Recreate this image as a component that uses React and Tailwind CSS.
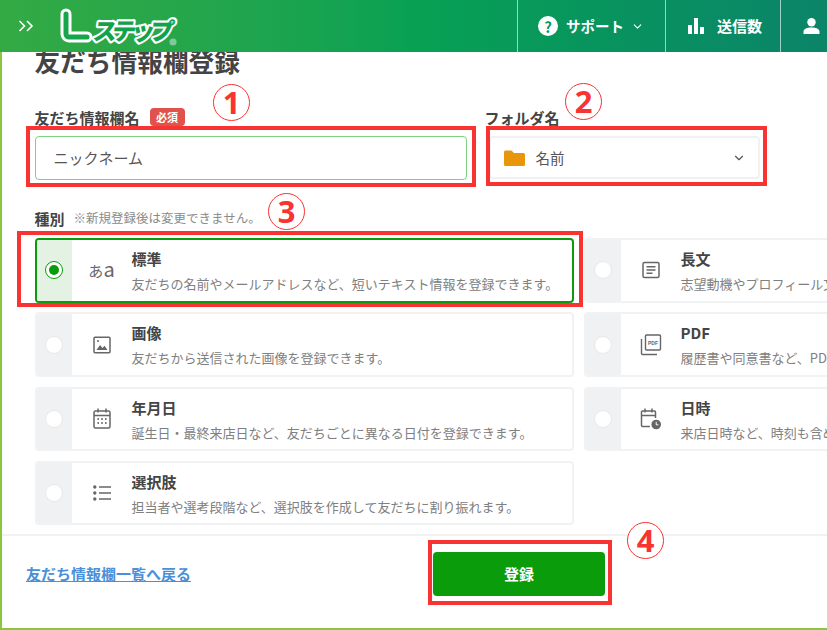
import React from 'react';
import { ChevronDown } from 'lucide-react';

const FONT = { fontFamily: '"Noto Sans CJK JP", "Noto Sans", sans-serif' };

const Logo = () => (
  <svg width="124" height="44" viewBox="0 0 124 44" className="shrink-0 self-center">
    <path d="M7 10v20a3 3 0 0 0 3 3h18" fill="none" stroke="#fff" strokeWidth="11" strokeLinecap="round" strokeLinejoin="round" />
    <path d="M7 10v20a3 3 0 0 0 3 3h18" fill="none" stroke="#16a54a" strokeWidth="5" strokeLinecap="round" strokeLinejoin="round" />
    <text transform="translate(33 36) skewX(-8)" fontSize="24" fontWeight="900" letterSpacing="-5" fontFamily="'Noto Sans CJK JP', sans-serif" fill="#12a24c" stroke="#fff" strokeWidth="4.4" strokeLinejoin="round" paintOrder="stroke">ステップ</text>
    <circle cx="114" cy="38" r="3.6" fill="#7fc99a" />
  </svg>
);

const IconText = () => (
  <svg width="18" height="18" viewBox="0 0 18 18" fill="none" stroke="#666" strokeWidth="1.5">
    <rect x="1" y="1.5" width="16" height="15" rx="1.5" />
    <path d="M4.5 5.8h9M4.5 9h9M4.5 12.2h6" />
  </svg>
);

const IconImage = () => (
  <svg width="18" height="18" viewBox="0 0 18 18" fill="none">
    <rect x="1" y="1.2" width="16" height="15.6" rx="1" stroke="#666" strokeWidth="1.5" />
    <circle cx="5" cy="5" r="1" fill="#666" />
    <path d="M3.5 14l3.6-5 2.4 3 2-2.2 3 4.2z" fill="#666" />
  </svg>
);

const IconPdf = () => (
  <svg width="22" height="22" viewBox="0 0 22 22" fill="none" stroke="#666" strokeWidth="1.4">
    <rect x="5.5" y="1" width="15" height="15" rx="1" />
    <path d="M1.5 5v14.5a1 1 0 0 0 1 1H17" />
    <text x="13" y="11" fontSize="5" fontWeight="700" textAnchor="middle" fill="#666" stroke="none" fontFamily="'Liberation Sans', sans-serif">PDF</text>
  </svg>
);

const IconCalendar = () => (
  <svg width="18" height="21" viewBox="0 0 18 21" fill="none" stroke="#666" strokeWidth="1.5">
    <rect x="1" y="3" width="16" height="17" rx="1.5" />
    <path d="M1 7.5h16M5 0.5v4M13 0.5v4" />
    <path d="M4.5 11h1.4M8.3 11h1.4M12.1 11h1.4M4.5 15h1.4M8.3 15h1.4M12.1 15h1.4" strokeWidth="1.8" />
  </svg>
);

const IconCalendarClock = () => (
  <svg width="22" height="22" viewBox="0 0 22 22" fill="none">
    <path d="M10 18.5H2.5a1 1 0 0 1-1-1V4a1 1 0 0 1 1-1h12a1 1 0 0 1 1 1v6M1.5 7.5h14M5 0.5v4M12 0.5v4" stroke="#666" strokeWidth="1.5" />
    <circle cx="16.2" cy="16.5" r="4.8" fill="#666" />
    <path d="M16.2 13.8v3h2.2" stroke="#fff" strokeWidth="1" />
  </svg>
);

const IconList = () => (
  <svg width="18" height="16" viewBox="0 0 18 16" fill="none">
    <circle cx="1.8" cy="2" r="1.7" fill="#666" />
    <circle cx="1.8" cy="8" r="1.7" fill="#666" />
    <circle cx="1.8" cy="14" r="1.7" fill="#666" />
    <path d="M6 2h12M6 8h12M6 14h12" stroke="#666" strokeWidth="1.5" />
  </svg>
);

const types = [
  { title: '標準', desc: '友だちの名前やメールアドレスなど、短いテキスト情報を登録できます。', icon: <span className="text-[15px] text-[#666]">あ<span className="text-[20px] leading-none">a</span></span>, selected: true },
  { title: '長文', desc: '志望動機やプロフィール文など、長いテキスト情報を登録できます。', icon: <IconText /> },
  { title: '画像', desc: '友だちから送信された画像を登録できます。', icon: <IconImage /> },
  { title: 'PDF', desc: '履歴書や同意書など、PDFファイルを登録できます。', icon: <IconPdf /> },
  { title: '年月日', desc: '誕生日・最終来店日など、友だちごとに異なる日付を登録できます。', icon: <IconCalendar /> },
  { title: '日時', desc: '来店日時など、時刻も含めた日付を登録できます。', icon: <IconCalendarClock /> },
  { title: '選択肢', desc: '担当者や選考段階など、選択肢を作成して友だちに割り振れます。', icon: <IconList /> },
];

const TypeCard = ({ title, desc, icon, selected }) => (
  <div className={`flex rounded overflow-hidden border-2 ${selected ? 'border-[#0a9c0a]' : 'border-[#f1f2f4]'}`}>
    <div className={`w-[35px] shrink-0 flex items-center justify-center ${selected ? 'bg-[#e3f2e3]' : 'bg-[#f0f1f3]'}`}>
      {selected ? (
        <span className="w-[18px] h-[18px] rounded-full bg-white border border-[#0a9c0a] flex items-center justify-center">
          <span className="w-[10px] h-[10px] rounded-full bg-[#0a9c0a]"></span>
        </span>
      ) : (
        <span className="w-[18px] h-[18px] rounded-full bg-white border border-[#e8e8e8]"></span>
      )}
    </div>
    <div className="w-[60px] shrink-0 flex items-center justify-center">{icon}</div>
    <div className="min-w-0 pt-[8px]">
      <div className="text-[15px] leading-[22px] font-bold text-[#444]">{title}</div>
      <div className="mt-[4px] text-[13px] leading-[20px] text-[#808080] whitespace-nowrap">{desc}</div>
    </div>
  </div>
);

// 説明用の赤枠と丸数字
const RedBox = ({ className }) => (
  <div className={`absolute border-4 border-[#f93232] pointer-events-none ${className}`}></div>
);

const Num = ({ n, className }) => (
  <div className={`absolute w-[37px] h-[37px] rounded-full border-[1.5px] border-[#f93232] bg-white flex items-center justify-center text-[31px] font-bold text-[#f93232] ${className}`}>
    <span className="leading-none" style={{ fontFamily: '"Noto Sans", sans-serif' }}>{n}</span>
  </div>
);

export default function App() {
  return (
    <div className="relative w-[827px] h-[630px] overflow-hidden bg-white flex flex-col" style={FONT}>
      {/* ヘッダー */}
      <header className="relative z-10 h-[52px] shrink-0 flex items-stretch text-white bg-gradient-to-r from-[#33aa44] via-[#07a153] to-[#0b8468]">
        <div className="flex items-center pl-[18px] w-[59px] text-[21px] leading-none">
          <svg width="16" height="12" viewBox="0 0 16 12" fill="none" stroke="#fff" strokeWidth="1.6">
            <path d="M1.5 1l5 5-5 5M9 1l5 5-5 5" />
          </svg>
        </div>
        <Logo />
        <div className="ml-auto flex items-stretch">
          <div className="w-[148px] border-l border-white/60 flex items-center pl-[20px]">
            <span className="w-[20px] h-[20px] rounded-full bg-white text-[#0a9560] text-[15px] font-bold flex items-center justify-center leading-none">?</span>
            <span className="ml-[8px] text-[14.5px] font-bold">サポート</span>
            <ChevronDown size={13} strokeWidth={2} className="ml-[7px]" />
          </div>
          <div className="w-[115px] border-l border-white/60 flex items-center pl-[22px]">
            <svg width="16" height="16" viewBox="0 0 16 16" fill="#fff">
              <rect x="0" y="7" width="4" height="9" />
              <rect x="6" y="0" width="4" height="16" />
              <rect x="12" y="9" width="4" height="7" />
            </svg>
            <span className="ml-[13px] text-[15px] font-bold">送信数</span>
          </div>
          <div className="w-[47px] border-l border-white/60 flex items-center pl-[22px]">
            <svg width="17" height="16" viewBox="0 0 17 16" fill="#fff">
              <circle cx="8.5" cy="4.2" r="4.2" />
              <path d="M0.5 16v-2.2C0.5 11 4 9.6 8.5 9.6s8 1.4 8 4.2V16z" />
            </svg>
          </div>
        </div>
      </header>

      {/* 本体 */}
      <main className="flex-1 min-h-0 border-l-2 border-b-2 border-[#8cc63f] flex flex-col">
        <div className="flex-1 pl-[32.5px] -mt-[4px]">
          <h1 className="text-[25.7px] leading-[26px] font-bold text-[#444] whitespace-nowrap">友だち情報欄登録</h1>

          <div className="mt-[33px] flex">
            <div className="w-[432px]">
              <div className="h-[20px] flex items-center">
                <span className="text-[15px] leading-none font-bold text-[#444]">友だち情報欄名</span>
                <span className="ml-[10px] h-[18px] w-[35px] rounded-sm bg-[#e0534c] text-white text-[11px] font-bold flex items-center justify-center leading-none">必須</span>
              </div>
              <div className="mt-[9px] h-[44px] rounded border border-[#7fd07f] flex items-center pl-[18px] text-[15px] text-[#555]">ニックネーム</div>
            </div>
            <div className="ml-[18px] w-[275px]">
              <div className="h-[20px] flex items-center text-[15px] leading-none font-bold text-[#444]">フォルダ名</div>
              <div className="mt-[9px] ml-[4px] h-[43px] w-[271px] rounded border-2 border-[#f1f1f3] flex items-center pl-[13px] pr-[12px]">
                <svg width="21" height="16" viewBox="0 0 21 16" fill="#e8960c">
                  <path d="M0 2a1.5 1.5 0 0 1 1.5-1.5h6L10 3h9.5A1.5 1.5 0 0 1 21 4.5v10a1.5 1.5 0 0 1-1.5 1.5h-18A1.5 1.5 0 0 1 0 14.5z" />
                </svg>
                <span className="ml-[11px] text-[14.5px] text-[#555]">名前</span>
                <ChevronDown size={14} strokeWidth={2} className="ml-auto text-[#555]" />
              </div>
            </div>
          </div>

          <div className="mt-[28px] h-[20px] flex items-center">
            <span className="text-[15px] leading-none font-bold text-[#444]">種別</span>
            <span className="ml-[9px] text-[12.5px] leading-none text-[#8a8a8a]">※新規登録後は変更できません。</span>
          </div>

          <div className="mt-[10px] grid grid-cols-[539px_539px] auto-rows-[64.5px] gap-x-[10px] gap-y-[9.8px]">
            {types.map((t) => (
              <TypeCard key={t.title} {...t} />
            ))}
          </div>
        </div>

        {/* フッター */}
        <div className="h-[94px] shrink-0 border-t-2 border-[#f1f2f4] pt-[16px] pl-[24px] flex items-start">
          <a href="#" className="w-[407px] h-[44px] flex items-center text-[15px] font-bold text-[#4a90d9] underline">友だち情報欄一覧へ戻る</a>
          <button className="w-[172px] h-[44px] rounded bg-[#0a9c0a] text-white text-[15px] font-bold">登録</button>
        </div>
      </main>

      {/* 注釈 */}
      <RedBox className="left-[26px] top-[126px] w-[450px] h-[61px]" />
      <RedBox className="left-[486px] top-[126px] w-[281px] h-[60px]" />
      <RedBox className="left-[17px] top-[231px] w-[566px] h-[76px]" />
      <RedBox className="left-[428px] top-[540px] w-[184px] h-[65px]" />
      <Num n="1" className="left-[213px] top-[84px]" />
      <Num n="2" className="left-[565px] top-[83px]" />
      <Num n="3" className="left-[268px] top-[193px]" />
      <Num n="4" className="left-[627px] top-[522px]" />
    </div>
  );
}
